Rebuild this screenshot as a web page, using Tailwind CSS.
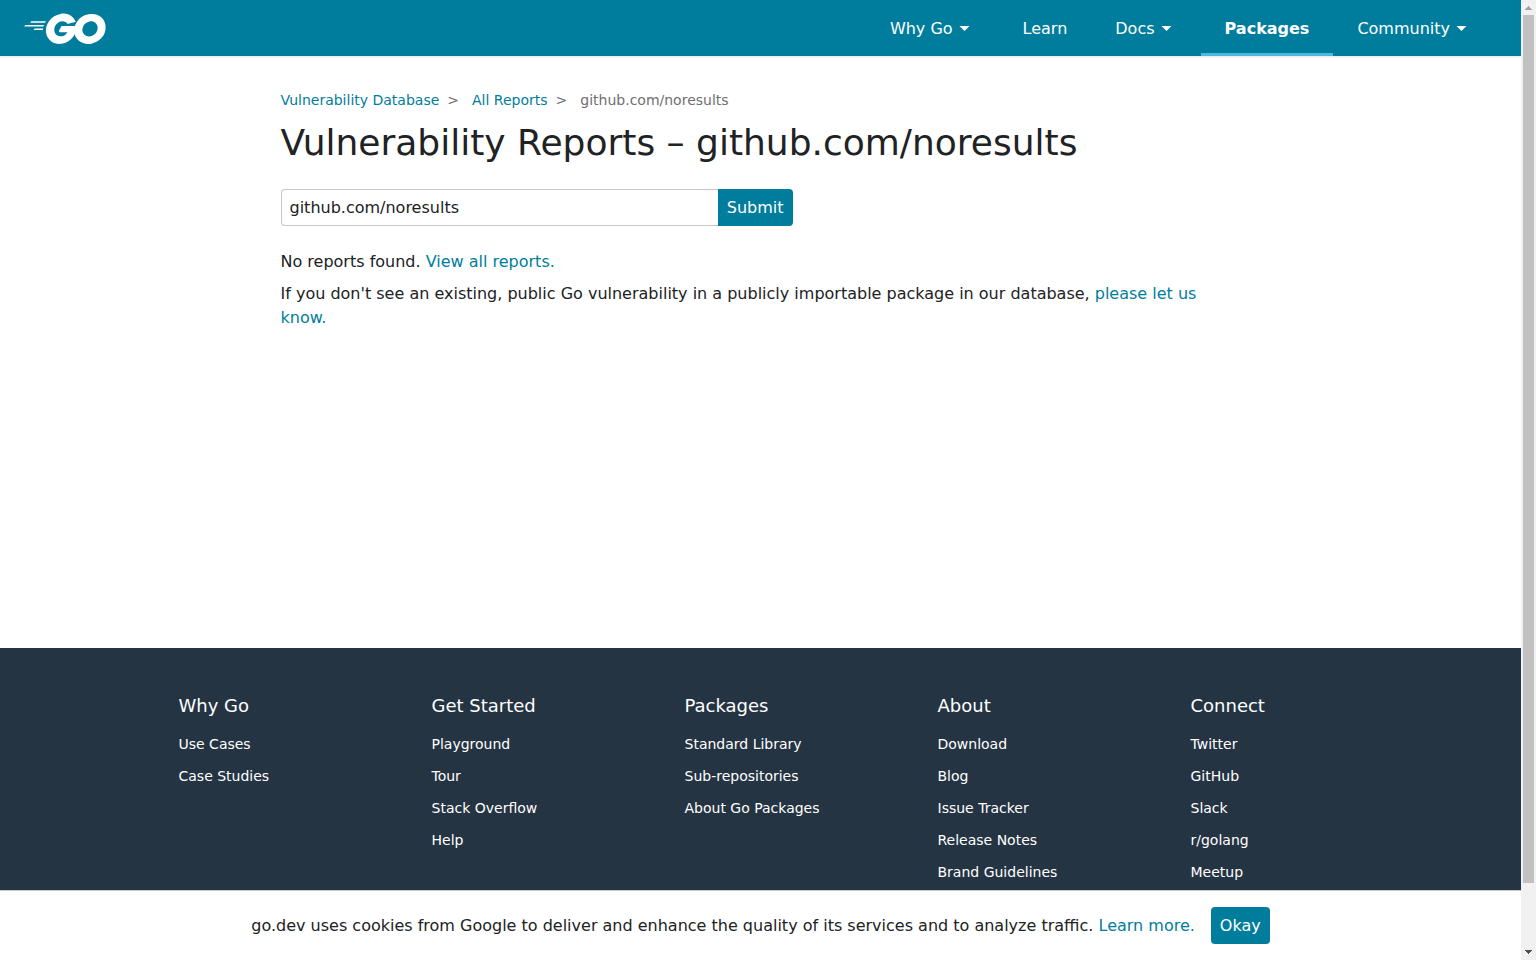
<!DOCTYPE html>
<html lang="en">
<head>
<meta charset="utf-8">
<meta name="viewport" content="width=device-width, initial-scale=1">
<title>Vulnerability Reports – github.com/noresults</title>
<script src="https://cdn.jsdelivr.net/npm/@tailwindcss/browser@4"></script>
</head>
<body class="flex h-screen overflow-hidden bg-white font-['DejaVu_Sans',sans-serif] text-base text-[#202224]">
<div class="relative h-full min-w-0 flex-1">
  <div class="h-full overflow-y-auto [scrollbar-width:none]">
    <div class="flex min-h-[calc(100vh-312px)] flex-col">
      <header class="flex h-14 items-center justify-between bg-[#007d9c] pr-[25px] pl-6 shadow-[0_1px_2px_rgba(171,171,171,0.3)]">
        <a href="#" aria-label="Go home">
          <svg class="h-[31px] w-[82px]" viewBox="24 77 207 77" fill="#fff" overflow="visible" aria-hidden="true">
            <path d="M40.2,101.1c-0.4,0-0.5-0.2-0.3-0.5l2.1-2.7c0.2-0.3,0.7-0.5,1.1-0.5l35.7,0c0.4,0,0.5,0.3,0.3,0.6l-1.7,2.6c-0.2,0.3-0.7,0.6-1,0.6L40.2,101.1z"/>
            <path d="M25.1,110.3c-0.4,0-0.5-0.2-0.3-0.5l2.1-2.7c0.2-0.3,0.7-0.5,1.1-0.5l45.6,0c0.4,0,0.6,0.3,0.5,0.6l-0.8,2.4c-0.1,0.4-0.5,0.6-0.9,0.6L25.1,110.3z"/>
            <path d="M49.3,119.5c-0.4,0-0.5-0.3-0.3-0.6l1.4-2.5c0.2-0.3,0.6-0.6,1-0.6l20,0c0.4,0,0.6,0.3,0.6,0.7l-0.2,2.4c0,0.4-0.4,0.7-0.7,0.7L49.3,119.5z"/>
            <path d="M153.1,99.3c-6.3,1.6-10.6,2.8-16.8,4.4c-1.5,0.4-1.6,0.5-2.9-1c-1.5-1.7-2.6-2.8-4.7-3.8c-6.3-3.1-12.4-2.2-18.1,1.5c-6.8,4.4-10.3,10.9-10.2,19c0.1,8,5.6,14.6,13.5,15.7c6.8,0.9,12.5-1.5,17-6.6c0.9-1.1,1.7-2.3,2.7-3.7c-3.6,0-8.1,0-19.3,0c-2.1,0-2.6-1.3-1.9-3c1.3-3.1,3.7-8.3,5.1-10.9c0.3-0.6,1-1.6,2.5-1.6c5.1,0,23.9,0,36.4,0c-0.2,2.7-0.2,5.4-0.6,8.1c-1.1,7.2-3.8,13.8-8.2,19.6c-7.2,9.5-16.6,15.4-28.5,17c-9.8,1.3-18.9-0.6-26.9-6.6c-7.4-5.6-11.6-13-12.7-22.2c-1.3-10.9,1.9-20.7,8.5-29.3c7.1-9.3,16.5-15.2,28-17.3c9.4-1.7,18.4-0.6,26.5,4.9c5.3,3.5,9.1,8.3,11.6,14.1C154.7,98.5,154.3,99,153.1,99.3z"/>
            <path d="M186.2,154.6c-9.1-0.2-17.4-2.8-24.4-8.8c-5.9-5.1-9.6-11.6-10.8-19.3c-1.8-11.3,1.3-21.3,8.1-30.2c7.3-9.6,16.1-14.6,28-16.7c10.2-1.8,19.8-0.8,28.5,5.1c7.9,5.4,12.8,12.7,14.1,22.3c1.7,13.5-2.2,24.5-11.5,33.9c-6.6,6.7-14.7,10.9-24,12.8C191.5,154.2,188.8,154.3,186.2,154.6z M210,114.2c-0.1-1.3-0.1-2.3-0.3-3.3c-1.8-9.9-10.9-15.5-20.4-13.3c-9.3,2.1-15.3,8-17.5,17.4c-1.8,7.8,2,15.7,9.2,18.9c5.5,2.4,11,2.1,16.3-0.6C205.2,129.2,209.5,122.8,210,114.2z"/>
          </svg>
        </a>
        <nav class="h-full" aria-label="Main">
          <ul class="flex h-full text-white">
            <li><a href="#" class="flex h-full items-center px-6 pt-0.5">Why Go<svg class="h-6 w-[22px]" viewBox="0 0 22 24" fill="#fff" aria-hidden="true"><path d="M6.500 9h10l-5 5z"/></svg></a></li>
            <li><a href="#" class="flex h-full items-center px-6 pt-0.5">Learn</a></li>
            <li><a href="#" class="flex h-full items-center px-6 pt-0.5">Docs<svg class="h-6 w-[22px]" viewBox="0 0 22 24" fill="#fff" aria-hidden="true"><path d="M6.500 9h10l-5 5z"/></svg></a></li>
            <li><a href="#" aria-current="page" class="flex h-full items-center border-b-3 border-[#50b7e0] px-6 pt-[5px] font-bold">Packages</a></li>
            <li><a href="#" class="flex h-full items-center px-6 pt-0.5">Community<svg class="h-6 w-[22px]" viewBox="0 0 22 24" fill="#fff" aria-hidden="true"><path d="M6.500 9h10l-5 5z"/></svg></a></li>
          </ul>
        </nav>
      </header>
      <main class="mx-auto w-full max-w-[960px] flex-1 pt-8">
        <nav aria-label="Breadcrumb">
          <ol class="flex text-sm leading-6 text-[#6e7072]">
            <li><a href="#" class="text-[#007d9c]">Vulnerability Database</a><span class="pr-[13px] pl-2">&gt;</span></li>
            <li><a href="#" class="text-[#007d9c]">All Reports</a><span class="pr-[13px] pl-2">&gt;</span></li>
            <li aria-current="page">github.com/noresults</li>
          </ol>
        </nav>
        <h1 class="mt-2 text-4xl leading-[45px]">Vulnerability Reports – github.com/noresults</h1>
        <form class="mt-6 flex h-[37px] max-w-[512px]">
          <input type="text" aria-label="Search reports" value="github.com/noresults" class="min-w-0 flex-1 rounded-l border border-r-0 border-[#c6c8ca] bg-white px-2 outline-none">
          <button type="button" class="rounded-r bg-[#007d9c] px-[9px] text-white">Submit</button>
        </form>
        <p class="mt-6 leading-6">No reports found. <a href="#" class="text-[#007d9c]">View all reports.</a></p>
        <p class="mt-2 leading-6">If you don't see an existing, public Go vulnerability in a publicly importable package in our database, <a href="#" class="text-[#007d9c]">please let us know.</a></p>
      </main>
    </div>
    <footer class="bg-[#253443] pt-11 pb-32 text-sm text-white">
      <div class="mx-auto flex max-w-[1265px] justify-around">
        <section class="w-38">
          <h2 class="text-lg leading-7"><a href="#">Why Go</a></h2>
          <ul class="leading-8"><li class="pt-2"><a href="#">Use Cases</a></li><li><a href="#">Case Studies</a></li></ul>
        </section>
        <section class="w-38">
          <h2 class="text-lg leading-7"><a href="#">Get Started</a></h2>
          <ul class="leading-8"><li class="pt-2"><a href="#">Playground</a></li><li><a href="#">Tour</a></li><li><a href="#">Stack Overflow</a></li><li><a href="#">Help</a></li></ul>
        </section>
        <section class="w-38">
          <h2 class="text-lg leading-7"><a href="#">Packages</a></h2>
          <ul class="leading-8"><li class="pt-2"><a href="#">Standard Library</a></li><li><a href="#">Sub-repositories</a></li><li><a href="#">About Go Packages</a></li></ul>
        </section>
        <section class="w-38">
          <h2 class="text-lg leading-7"><a href="#">About</a></h2>
          <ul class="leading-8"><li class="pt-2"><a href="#">Download</a></li><li><a href="#">Blog</a></li><li><a href="#">Issue Tracker</a></li><li><a href="#">Release Notes</a></li><li><a href="#">Brand Guidelines</a></li></ul>
        </section>
        <section class="w-38">
          <h2 class="text-lg leading-7"><a href="#">Connect</a></h2>
          <ul class="leading-8"><li class="pt-2"><a href="#">Twitter</a></li><li><a href="#">GitHub</a></li><li><a href="#">Slack</a></li><li><a href="#">r/golang</a></li><li><a href="#">Meetup</a></li></ul>
        </section>
      </div>
    </footer>
  </div>
  <!-- Cookie notice, pinned over the page bottom -->
  <div class="absolute inset-x-0 bottom-0 flex items-center justify-center gap-4 border-t border-[#c6c8ca] bg-white py-4">
    <p>go.dev uses cookies from Google to deliver and enhance the quality of its services and to analyze traffic. <a href="#" class="text-[#007d9c]">Learn more.</a></p>
    <button type="button" class="h-[37px] rounded bg-[#007d9c] px-[9px] text-white">Okay</button>
  </div>
</div>
<!-- Scrollbar -->
<div class="flex w-[15px] shrink-0 flex-col items-center bg-[#f1f1f1]" aria-hidden="true">
  <svg class="h-[15px] w-[15px] shrink-0" viewBox="0 0 15 15" fill="#a3a3a3" shape-rendering="crispEdges"><path d="M4 10h7v-1h-1v-1h-1v-1h-1v-1h-1v1h-1v1h-1v1h-1z"/></svg>
  <div class="flex w-[11px] flex-1 flex-col"><div class="grow-[868] bg-[#c1c1c1]"></div><div class="grow-[62]"></div></div>
  <svg class="h-[15px] w-[15px] shrink-0" viewBox="0 0 15 15" fill="#505050" shape-rendering="crispEdges"><path d="M4 5h7v1h-1v1h-1v1h-1v1h-1v-1h-1v-1h-1v-1h-1z"/></svg>
</div>
</body>
</html>
